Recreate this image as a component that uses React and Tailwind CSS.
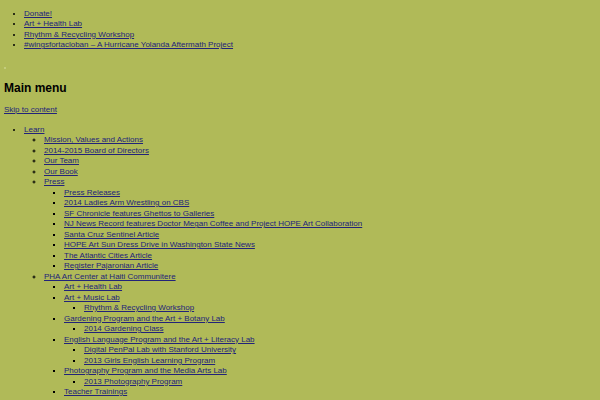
const topLinks = [
  "Donate!",
  "Art + Health Lab",
  "Rhythm & Recycling Workshop",
  "#wingsfortacloban – A Hurricane Yolanda Aftermath Project",
];

const menu = [
  {
    label: "Learn",
    children: [
      { label: "Mission, Values and Actions" },
      { label: "2014-2015 Board of Directors" },
      { label: "Our Team" },
      { label: "Our Book" },
      {
        label: "Press",
        children: [
          { label: "Press Releases" },
          { label: "2014 Ladies Arm Wrestling on CBS" },
          { label: "SF Chronicle features Ghettos to Galleries" },
          { label: "NJ News Record features Doctor Megan Coffee and Project HOPE Art Collaboration" },
          { label: "Santa Cruz Sentinel Article" },
          { label: "HOPE Art Sun Dress Drive in Washington State News" },
          { label: "The Atlantic Cities Article" },
          { label: "Register Pajaronian Article" },
        ],
      },
      {
        label: "PHA Art Center at Haiti Communitere",
        children: [
          { label: "Art + Health Lab" },
          { label: "Art + Music Lab", children: [{ label: "Rhythm & Recycling Workshop" }] },
          {
            label: "Gardening Program and the Art + Botany Lab",
            children: [{ label: "2014 Gardening Class" }],
          },
          {
            label: "English Language Program and the Art + Literacy Lab",
            children: [
              { label: "Digital PenPal Lab with Stanford University" },
              { label: "2013 Girls English Learning Program" },
            ],
          },
          {
            label: "Photography Program and the Media Arts Lab",
            children: [{ label: "2013 Photography Program" }],
          },
          { label: "Teacher Trainings" },
        ],
      },
      { label: "Contact Us" },
    ],
  },
];

const listStyles = ["list-disc", "list-[circle]", "list-[square]", "list-[square]"];

const Link = ({ children }) => (
  <a href="#" className="text-[#22237a] underline">
    {children}
  </a>
);

// recursive nested list, browser-default look
const MenuList = ({ items, depth = 0 }) => (
  <ul className={`${listStyles[depth]} pl-5`}>
    {items.map((item, i) => (
      <li key={i}>
        <Link>{item.label}</Link>
        {item.children && <MenuList items={item.children} depth={depth + 1} />}
      </li>
    ))}
  </ul>
);

export default function App() {
  return (
    <div
      className="min-h-screen bg-[#b0ba58] p-1 text-[8px] leading-[10.5px] text-black"
      style={{ fontFamily: '"Liberation Sans", Arial, sans-serif' }}
    >
      <ul className="list-disc pl-5 mt-[4.5px]">
        {topLinks.map((t) => (
          <li key={t}>
            <Link>{t}</Link>
          </li>
        ))}
      </ul>

      <div className="mt-[12px] h-[10.5px] flex items-center">
        <span className="block w-[2px] h-[2px] bg-[#c4cc7c]" />
      </div>

      <h2 className="mt-[8px] text-[12px] leading-[14px] font-bold">Main menu</h2>

      <div className="mt-[10px]">
        <Link>Skip to content</Link>
      </div>

      <div className="mt-[9px]">
        <MenuList items={menu} />
      </div>
    </div>
  );
}
